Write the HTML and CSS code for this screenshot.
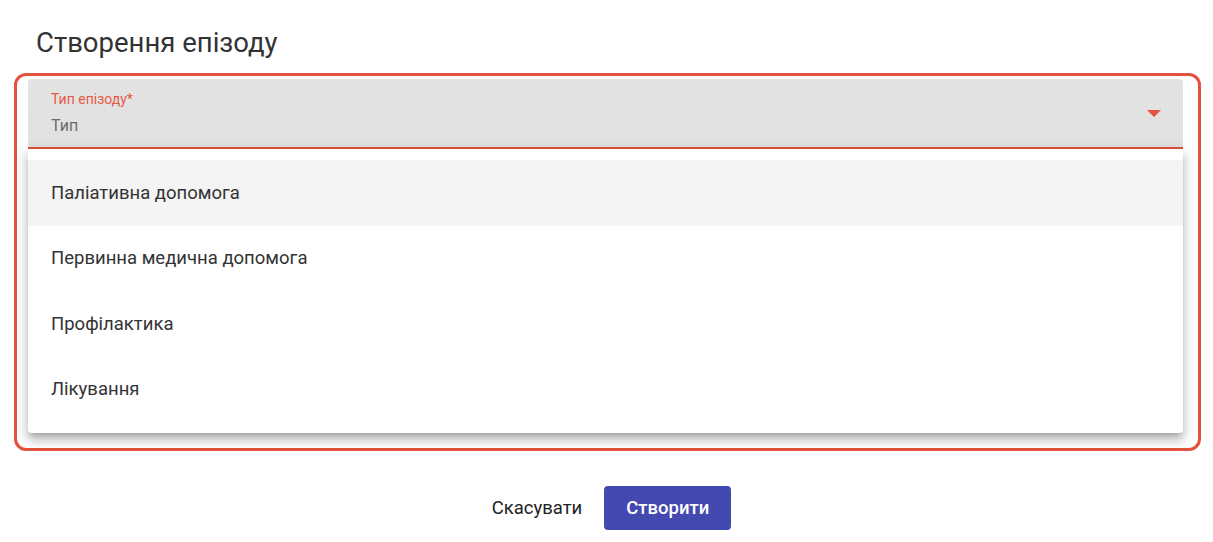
FILE: index.html
```html
<!DOCTYPE html>
<html lang="uk">
<head>
<meta charset="utf-8">
<link rel="stylesheet" href="styles.css">
</head>
<body>
<div class="dialog">
  <h1 class="title">Створення епізоду</h1>
  <div class="focus-ring">
    <div class="field">
      <div class="field-text">
        <div class="label">Тип епізоду*</div>
        <div class="value">Тип</div>
      </div>
      <svg class="arrow" width="14" height="8" viewBox="0 0 14 8"><path d="M0 0 L14 0 L7 7 Z" fill="#e4513d"/></svg>
    </div>
    <ul class="menu">
      <li class="item active">Паліативна допомога</li>
      <li class="item">Первинна медична допомога</li>
      <li class="item">Профілактика</li>
      <li class="item">Лікування</li>
    </ul>
  </div>
  <div class="actions">
    <button class="btn btn-text">Скасувати</button>
    <button class="btn btn-primary">Створити</button>
  </div>
</div>
</body>
</html>
```
FILE: styles.css
```css
* { box-sizing: border-box; }
body {
  margin: 0;
  background: #ffffff;
  font-family: Roboto, "Noto Sans", sans-serif;
  color: #333333;
}
.dialog {
  padding: 27px 12px 0 14px;
}
.title {
  margin: 0 0 14px 22px;
  font-size: 27.5px;
  line-height: 32px;
  font-weight: 400;
  color: #333333;
}
.focus-ring {
  border: 3px solid #e4513d;
  border-radius: 12px;
  padding: 3px 15px 15px 11px;
}
.field {
  height: 70px;
  background: linear-gradient(#e3e3e3, #e1e1e1);
  border-radius: 4px 4px 0 0;
  border-bottom: 2px solid #e4513d;
  display: flex;
  align-items: center;
  justify-content: space-between;
  padding: 0 22px 0 23px;
}
.field-text {
  display: flex;
  flex-direction: column;
  padding-top: 0;
}
.label {
  font-size: 14px;
  line-height: 16px;
  color: #e65a43;
}
.value {
  margin-top: 9px;
  font-size: 16px;
  line-height: 20px;
  color: #6b6b6b;
}
.arrow {
  margin-top: 2px;
}
.menu {
  list-style: none;
  margin: 0;
  padding: 11px 0;
  background: #ffffff;
  border-radius: 0 0 4px 4px;
  box-shadow: 0 5px 5px -3px rgba(0,0,0,.2), 0 8px 10px 1px rgba(0,0,0,.14), 0 3px 14px 2px rgba(0,0,0,.12);
}
.item {
  height: 65.5px;
  display: flex;
  align-items: center;
  padding-left: 23px;
  font-size: 18.5px;
  color: #333333;
}
.item.active {
  background: #f4f4f4;
}
.actions {
  display: flex;
  justify-content: center;
  gap: 6px;
  margin-top: 35px;
  padding-right: 8px;
}
.btn {
  height: 44px;
  border: none;
  border-radius: 4px;
  font-family: Roboto, "Noto Sans", sans-serif;
  font-size: 18.5px;
  cursor: pointer;
}
.btn-text {
  background: transparent;
  color: #222222;
  padding: 0 16px;
}
.btn-primary {
  background: #4349b1;
  color: #ffffff;
  padding: 0 10px;
  font-weight: 500;
  width: 127px;
}
```
